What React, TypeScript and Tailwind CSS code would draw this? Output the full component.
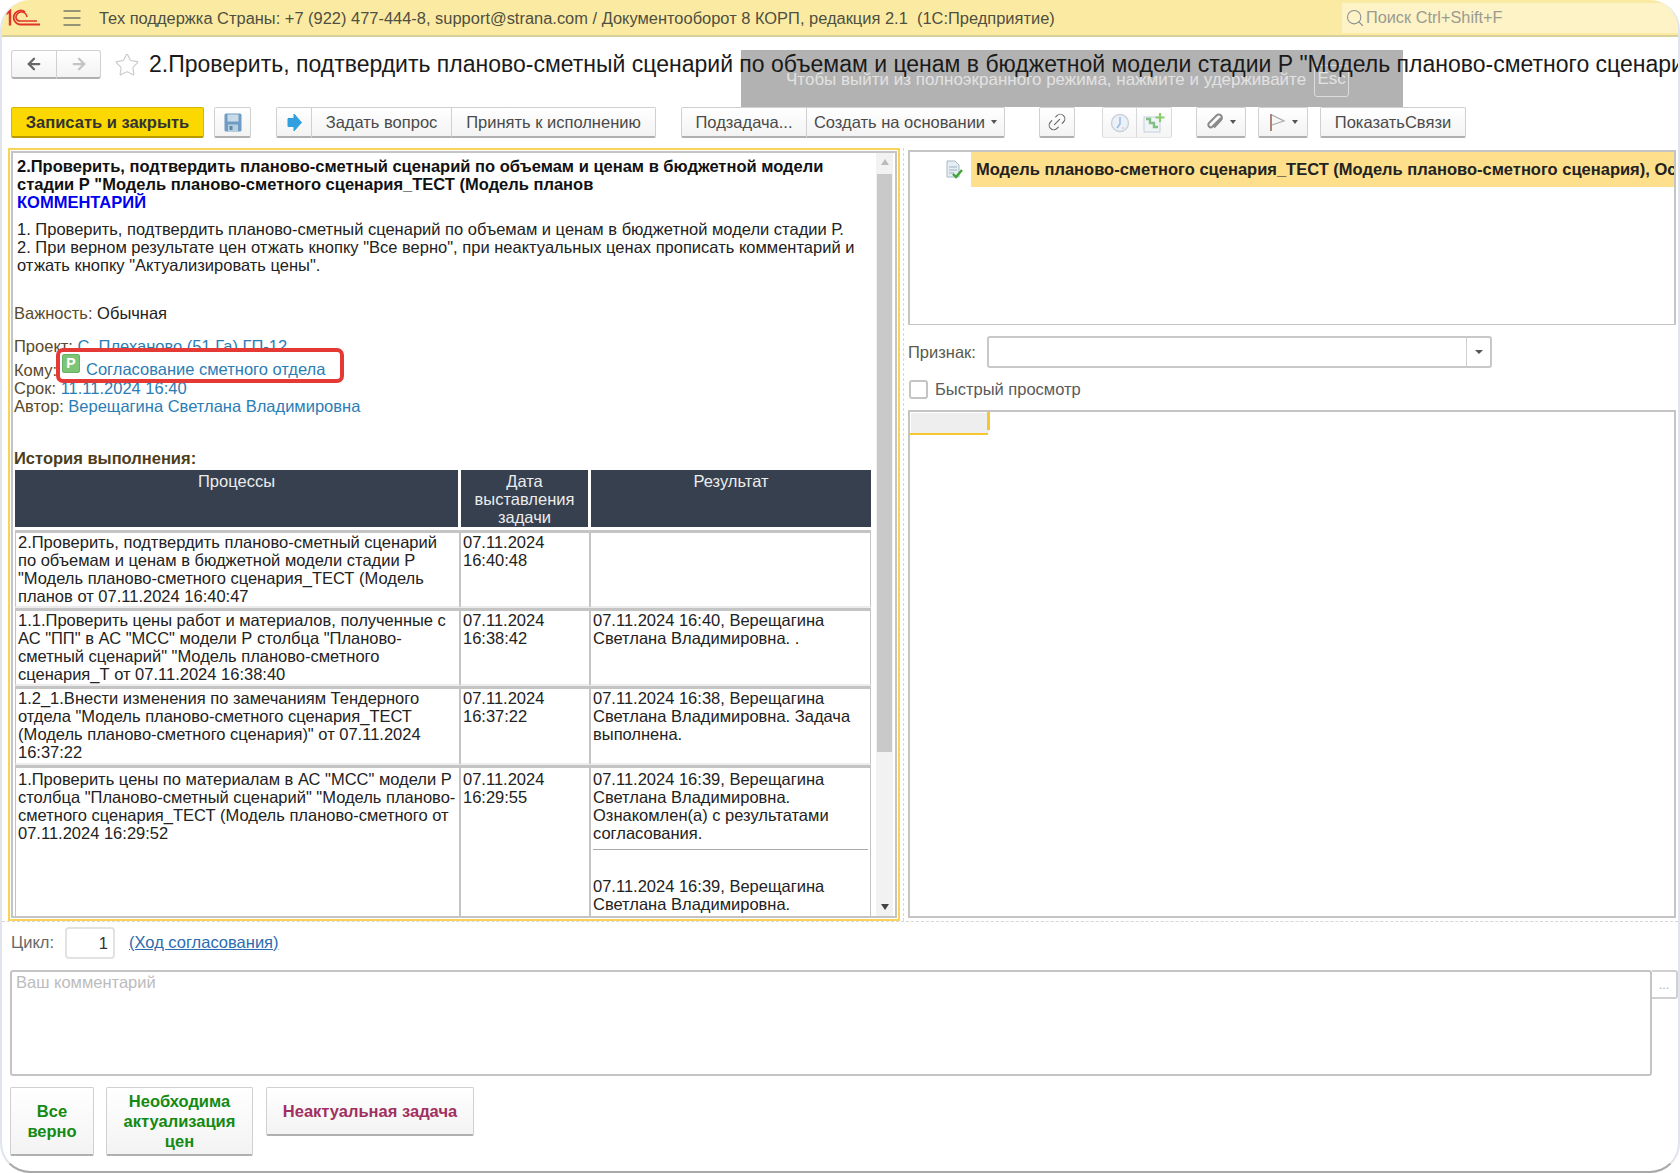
import React from "react";
import { ArrowLeft, ArrowRight, Star, Link2, Search, Menu } from "lucide-react";

const Logo = () => (
  <svg width="36" height="18" viewBox="0 0 36 18" fill="none" stroke="#e0352a">
    <path d="M1 5 L5 2 V16.5" strokeWidth="2.4" />
    <path d="M20 3 A7 7 0 1 0 15 15.5 H35" strokeWidth="1.8" />
    <path d="M22 8 A5.5 5.5 0 0 0 11 9 A4 4 0 0 0 15 12 H32" strokeWidth="1.6" />
  </svg>
);

const Floppy = () => (
  <svg width="18" height="19" viewBox="0 0 18 19">
    <rect x="0.5" y="0.5" width="17" height="18" rx="1.5" fill="#6f9cc4" />
    <rect x="3.5" y="1.5" width="11" height="7" fill="#c9dbe9" />
    <rect x="4" y="11.5" width="10" height="7" fill="#b8cfe0" />
    <rect x="5.5" y="13" width="3" height="4" fill="#5f86a6" />
  </svg>
);

const BlueArrow = () => (
  <svg width="15" height="19" viewBox="0 0 15 19">
    <path d="M1 5.5 H7 V1 L14.5 9.5 L7 18 V13.5 H1 Z" fill="#2f9fe0" stroke="#2f9fe0" strokeLinejoin="round" />
  </svg>
);

const ClockIcon = () => (
  <svg width="20" height="20" viewBox="0 0 20 20" fill="none">
    <circle cx="10" cy="10" r="8.5" fill="#e6eef6" stroke="#bcc6d2" strokeWidth="1.4" />
    <path d="M10 4 V11 L7 15" stroke="#7aa6d6" strokeWidth="1.4" />
    <circle cx="13" cy="15" r="1" fill="#e8b4b4" />
  </svg>
);

const ChartPlus = () => (
  <svg width="22" height="20" viewBox="0 0 22 20" fill="none">
    <rect x="1" y="4" width="16" height="15" fill="#eef2f4" stroke="#b4c4d8" />
    <path d="M3 6 H7 V10 H11 V14 H15" stroke="#62b06a" strokeWidth="2.4" />
    <path d="M17 0 V9 M12.5 4.5 H21.5" stroke="#6cc04a" strokeWidth="2.2" />
  </svg>
);

const Clip = () => (
  <svg width="18" height="18" viewBox="0 0 18 18" fill="none" stroke="#8a8a8a" strokeWidth="2">
    <path d="M15 5 L6.5 13.5 A2.4 2.4 0 0 1 3 10 L10.5 2.5 A3 3 0 0 1 15 7 L8 14.5" />
  </svg>
);

const FlagIcon = () => (
  <svg width="18" height="20" viewBox="0 0 18 20" fill="none">
    <path d="M3 2 V19" stroke="#a5756a" strokeWidth="1.8" />
    <path d="M4 3 L16 9 L4 13" stroke="#aaaaaa" strokeWidth="1.2" fill="#f6f6f6" />
  </svg>
);

const DocCheck = () => (
  <svg width="18" height="19" viewBox="0 0 18 19" fill="none">
    <path d="M2 1 H10 L14 5 V17 H2 Z" fill="#e6edf3" stroke="#a8b8c6" />
    <path d="M4 7 H12 M4 10 H12 M4 13 H9" stroke="#9fb2c2" />
    <path d="M8 14 L11 17 L17 10" stroke="#3fa535" strokeWidth="2.4" />
  </svg>
);

const Caret = () => <span className="ml-[6px] inline-block border-x-[3px] border-t-[4px] border-x-transparent border-t-[#555]" />;

const btn = "flex items-center justify-center shrink-0 whitespace-nowrap bg-gradient-to-b from-white to-[#f3f3f3] border border-[#d0d0d0] border-b-2 border-b-[#b0b0b0] text-[#4a4a4a] text-[16.5px] h-[31px]";

const rows = [
  {
    p: '2.Проверить, подтвердить планово-сметный сценарий по объемам и ценам в бюджетной модели стадии Р "Модель планово-сметного сценария_ТЕСТ (Модель планов от 07.11.2024 16:40:47',
    d: ["07.11.2024", "16:40:48"],
    r: "",
    h: "h-[78px]",
  },
  {
    p: '1.1.Проверить цены работ и материалов, полученные с АС "ПП" в АС "МСС" модели Р столбца "Планово-сметный сценарий" "Модель планово-сметного сценария_Т от 07.11.2024 16:38:40',
    d: ["07.11.2024", "16:38:42"],
    r: "07.11.2024 16:40, Верещагина Светлана Владимировна. .",
    h: "h-[78px]",
  },
  {
    p: '1.2_1.Внести изменения по замечаниям Тендерного отдела "Модель планово-сметного сценария_ТЕСТ (Модель планово-сметного сценария)" от 07.11.2024 16:37:22',
    d: ["07.11.2024", "16:37:22"],
    r: "07.11.2024 16:38, Верещагина Светлана Владимировна. Задача выполнена.",
    h: "h-[79px]",
  },
];

const cell = "border-x-[1px] border-b-2 border-t-[3px] border-[#c4c4c4] border-b-[#ececec] align-top px-[2px] pt-0";

export default function App() {
  return (
    <div
      className="relative w-[1680px] h-[1173px] overflow-hidden rounded-[30px] border-x-2 border-b-2 border-x-[#dfe5ea] border-b-[#a8a8a8] bg-white text-[#333] flex flex-col"
      style={{ fontFamily: '"Liberation Sans", Arial, sans-serif' }}
    >
      {/* header */}
      <div className="flex items-center h-[37px] shrink-0 bg-[#fbeba2] border-b-2 border-[#d8d09a]">
        <div className="ml-[3px] w-[55px] shrink-0 pt-[1px]"><Logo /></div>
        <Menu size={24} strokeWidth={1.4} className="text-[#77776a] shrink-0" />
        <div className="ml-[15px] pt-[1px] text-[16.45px] text-[#4f4f42] whitespace-nowrap flex-1">
          Тех поддержка Страны: +7 (922) 477-444-8, support@strana.com / Документооборот 8 КОРП, редакция 2.1&nbsp; (1С:Предприятие)
        </div>
        <div className="flex items-center w-[336px] h-[30px] shrink-0 bg-[#fdf3c6] text-[#9b9b90] text-[16.3px] pl-[3px]">
          <Search size={20} strokeWidth={1.3} className="text-[#8a8f94] mr-[1px]" />
          Поиск Ctrl+Shift+F
        </div>
      </div>

      {/* title */}
      <div className="relative flex items-center h-[29px] mt-[13px] shrink-0 pl-[9px]">
        <div className={btn + " w-[46px] rounded-l-[3px] !h-[29px]"}><ArrowLeft size={18} strokeWidth={3} className="text-[#666]" /></div>
        <div className={btn + " w-[44px] rounded-r-[3px] !h-[29px] border-l-0"}><ArrowRight size={18} strokeWidth={3} className="text-[#c4c4c4]" /></div>
        <Star size={26} strokeWidth={1} className="ml-[13px] text-[#c8c8c8] shrink-0" />
        <div className="relative z-10 ml-[9px] text-[23px] text-[#1a1a1a] whitespace-nowrap">
          2.Проверить, подтвердить планово-сметный сценарий по объемам и ценам в бюджетной модели стадии Р "Модель планово-сметного сценария_ТЕСТ (Модель планово-сметного сценария)
        </div>
        <div className="absolute left-[739px] top-0 w-[662px] h-[57px] bg-[#b2b2b2] flex items-start pl-[45px] gap-[8px] text-[#e2e2e2] text-[17px] pt-[15px]">
          <span className="mt-[2px]">Чтобы выйти из полноэкранного режима, нажмите и удерживайте</span>
          <span className="border border-[#dcdcdc] rounded-[3px] w-[35px] h-[32px] flex items-center justify-center pb-[5px]">Esc</span>
        </div>
      </div>

      {/* toolbar */}
      <div className="relative z-10 flex items-center h-[31px] mt-[28px] shrink-0 pl-[9px]">
        <div className="flex items-center justify-center w-[193px] h-[31px] rounded-[2px] bg-[#fbd900] border border-[#d8b400] border-b-2 border-b-[#b89b00] text-[16.5px] font-bold text-[#333]">Записать и закрыть</div>
        <div className={btn + " w-[37px] ml-[10px] rounded-[2px]"}><Floppy /></div>
        <div className="flex ml-[25px]">
          <div className={btn + " w-[36px] rounded-l-[2px]"}><BlueArrow /></div>
          <div className={btn + " w-[140px] border-l-0"}>Задать вопрос</div>
          <div className={btn + " w-[204px] border-l-0 rounded-r-[2px]"}>Принять к исполнению</div>
        </div>
        <div className="flex ml-[25px]">
          <div className={btn + " w-[126px] rounded-l-[2px]"}>Подзадача...</div>
          <div className={btn + " w-[198px] border-l-0 rounded-r-[2px]"}>Создать на основании<Caret /></div>
        </div>
        <div className={btn + " w-[36px] ml-[34px] rounded-[2px]"}><Link2 size={22} strokeWidth={1.2} className="-rotate-45 text-[#666]" /></div>
        <div className="flex ml-[27px] opacity-80">
          <div className={btn + " w-[35px] rounded-l-[2px] !border-b !border-b-[#e0e0e0]"}><ClockIcon /></div>
          <div className={btn + " w-[35px] border-l-0 rounded-r-[2px] !border-b !border-b-[#e0e0e0]"}><ChartPlus /></div>
        </div>
        <div className={btn + " w-[50px] ml-[24px] rounded-[2px]"}><Clip /><Caret /></div>
        <div className={btn + " w-[50px] ml-[12px] rounded-[2px]"}><FlagIcon /><Caret /></div>
        <div className={btn + " w-[146px] ml-[12px] rounded-[2px]"}>ПоказатьСвязи</div>
      </div>

      {/* main */}
      <div className="flex h-[774px] mt-[10px] shrink-0 border-b border-dashed border-[#d8d8d8]">
        {/* left panel */}
        <div className="relative ml-[6px] w-[892px] h-[773px] shrink-0 border-2 border-[#f7d458] p-[1px]">
          <div className="relative flex h-full border-2 border-[#c4c4c4] overflow-hidden">
            <div className="relative flex-1 min-w-0 overflow-hidden pt-[4px] pl-[1px] text-[16.5px] leading-[18px]">
              <div className="pl-[3px]">
                <div className="font-bold text-[#111]">
                  2.Проверить, подтвердить планово-сметный сценарий по объемам и ценам в бюджетной модели<br />
                  стадии Р "Модель планово-сметного сценария_ТЕСТ (Модель планов
                </div>
                <div className="font-bold text-[#0000f0]">КОММЕНТАРИЙ</div>
                <div className="mt-[9px] text-[#222]">
                  1. Проверить, подтвердить планово-сметный сценарий по объемам и ценам в бюджетной модели стадии Р.<br />
                  2. При верном результате цен отжать кнопку "Все верно", при неактуальных ценах прописать комментарий и<br />
                  отжать кнопку "Актуализировать цены".
                </div>
              </div>
              <div className="mt-[30px] text-[#5a4a2a]">Важность: <span className="text-[#222]">Обычная</span></div>
              <div className="mt-[15px] text-[#5a4a2a]">Проект: <span className="text-[#2b7db5]">С. Плеханово (51 Га) ГП-12</span></div>
              <div className="mt-[6px] text-[#5a4a2a]">Кому:</div>
              <div className="text-[#5a4a2a]">Срок: <span className="text-[#2b7db5]">11.11.2024 16:40</span></div>
              <div className="text-[#5a4a2a]">Автор: <span className="text-[#2b7db5]">Верещагина Светлана Владимировна</span></div>
              <div className="mt-[34px] font-bold text-[#4d3d1a]">История выполнения:</div>

              <div className="absolute left-[43px] top-[195px] w-[288px] h-[35px] border-[4px] border-[#e53935] rounded-[7px] bg-white flex items-center pl-[2px]">
                <span className="flex items-center justify-center w-[18px] h-[19px] -mt-[5px] rounded-[2px] bg-[#7cc576] border border-[#6ab064] text-white text-[14px] font-bold leading-none">P</span>
                <span className="ml-[6px] pt-[6px] text-[#2b7db5]">Согласование сметного отдела</span>
              </div>

              <table className="ml-[1px] mt-[3px] border-separate border-spacing-0 table-fixed w-[856px] text-[#222]">
                <colgroup>
                  <col className="w-[445px]" />
                  <col className="w-[130px]" />
                  <col className="w-[281px]" />
                </colgroup>
                <thead>
                  <tr className="h-[57px]">
                    <th className="bg-[#36404f] border-r-2 border-white font-normal text-[#ececec] align-top text-center pt-[2px]">Процессы</th>
                    <th className="bg-[#36404f] border-r-2 border-l border-white font-normal text-[#ececec] align-top text-center pt-[2px]">Дата выставления задачи</th>
                    <th className="bg-[#36404f] border-l border-white font-normal text-[#ececec] align-top text-center pt-[2px]">Результат</th>
                  </tr>
                </thead>
                <tbody>
                  <tr className="h-[3px]"><td colSpan={3} /></tr>
                  {rows.map((r, i) => (
                    <tr key={i} className={r.h}>
                      <td className={cell}>{r.p}</td>
                      <td className={cell}>{r.d[0]}<br />{r.d[1]}</td>
                      <td className={cell}>{r.r}</td>
                    </tr>
                  ))}
                  <tr className="h-[170px]">
                    <td className={cell + " !pt-[2px]"}>1.Проверить цены по материалам в АС "МСС" модели Р столбца "Планово-сметный сценарий" "Модель планово-сметного сценария_ТЕСТ (Модель планово-сметного от 07.11.2024 16:29:52</td>
                    <td className={cell + " !pt-[2px]"}>07.11.2024<br />16:29:55</td>
                    <td className={cell + " !pt-[2px]"}>
                      07.11.2024 16:39, Верещагина Светлана Владимировна. Ознакомлен(а) с результатами согласования.
                      <div className="border-t border-[#aaa] mt-[7px] mb-[27px]" />
                      07.11.2024 16:39, Верещагина Светлана Владимировна.
                    </td>
                  </tr>
                </tbody>
              </table>
            </div>
            {/* scrollbar */}
            <div className="relative w-[17px] shrink-0 h-full bg-[#f2f2f2] flex flex-col items-center">
              <span className="mt-[6px] border-x-[4px] border-b-[6px] border-x-transparent border-b-[#bbb]" />
              <div className="mt-[9px] w-[15px] h-[578px] bg-[#c9c9c9]" />
              <span className="absolute bottom-[6px] border-x-[4px] border-t-[6px] border-x-transparent border-t-[#444]" />
            </div>
            <div className="w-[2px] shrink-0" />
          </div>
        </div>
        <div className="ml-[3px] w-0 h-full border-l border-dashed border-[#d8d8d8]" />
        {/* right panel */}
        <div className="ml-[4px] mt-[2px] w-[768px] h-[768px] flex flex-col shrink-0">
          <div className="h-[175px] border-2 border-b border-[#c4c4c4] flex items-start overflow-hidden">
            <div className="ml-[35px] w-[26px] h-[35px] flex items-center shrink-0"><DocCheck /></div>
            <div className="flex-1 min-w-0 h-[35px] bg-[#fddf8c] pl-[5px] flex items-center font-bold text-[16.5px] text-[#222] whitespace-nowrap overflow-hidden">
              Модель планово-сметного сценария_ТЕСТ (Модель планово-сметного сценария), Ос
            </div>
          </div>
          <div className="flex items-center mt-[11px] h-[32px]">
            <span className="text-[16.5px] text-[#5a5a4a] w-[79px]">Признак:</span>
            <div className="flex w-[505px] h-[32px] border-2 border-[#c8c8c8] rounded-[3px]">
              <div className="flex-1" />
              <div className="w-[24px] border-l border-[#d0d0d0] flex items-center justify-center">
                <span className="border-x-[4px] border-t-[4px] border-x-transparent border-t-[#555]" />
              </div>
            </div>
          </div>
          <div className="flex items-center mt-[11px] h-[20px]">
            <span className="w-[19px] h-[19px] border-2 border-[#c4c4c4] rounded-[3px] ml-[1px] bg-white" />
            <span className="ml-[7px] text-[16.5px] text-[#5a5a5a]">Быстрый просмотр</span>
          </div>
          <div className="mt-[11px] flex-1 border-2 border-[#c4c4c4] relative">
            <div className="absolute left-0 top-0 w-[80px] h-[23px]">
              <div className="w-[78px] h-[20px] bg-[#eeeeee] ml-[1px] mt-[1px]" />
              <div className="absolute right-0 top-0 w-[3px] h-[18px] bg-[#f7c52d]" />
              <div className="absolute left-0 bottom-0 w-[78px] h-[2px] bg-[#f7c52d]" />
            </div>
          </div>
        </div>
      </div>

      {/* cycle */}
      <div className="flex items-center h-[32px] mt-[5px] shrink-0 pl-[9px] text-[16.5px]">
        <span className="text-[#666] w-[54px] -mt-[2px]">Цикл:</span>
        <div className="w-[50px] h-[32px] border-2 border-[#e2e2e2] rounded-[4px] flex items-center justify-end pr-[5px] text-[#333]">1</div>
        <span className="ml-[14px] -mt-[2px] text-[#2b6cb0] underline">(Ход согласования)</span>
      </div>

      {/* comment */}
      <div className="flex mt-[11px] h-[106px] shrink-0 pl-[8px]">
        <div className="w-[1642px] h-full border-2 border-[#c4c4c4] rounded-[3px] pl-[4px] text-[16.5px] text-[#bcbcbc] leading-[20px]">Ваш комментарий</div>
        <div className="w-[26px] h-[29px] border-2 border-l-0 border-[#d0d0d0] rounded-r-[3px] flex items-center justify-center text-[#aaa] text-[12px] leading-none">...</div>
      </div>

      {/* actions */}
      <div className="flex items-start mt-[11px] pl-[8px] font-bold leading-[20px]">
        <div className={btn + " !h-[69px] w-[84px] rounded-[2px] !text-[#138a12] text-center"}>Все<br />верно</div>
        <div className={btn + " !h-[69px] w-[147px] ml-[12px] rounded-[2px] !text-[#138a12] text-center"}>Необходима<br />актуализация<br />цен</div>
        <div className={btn + " !h-[49px] w-[208px] ml-[13px] rounded-[2px] !text-[#a03060]"}>Неактуальная задача</div>
      </div>
    </div>
  );
}
